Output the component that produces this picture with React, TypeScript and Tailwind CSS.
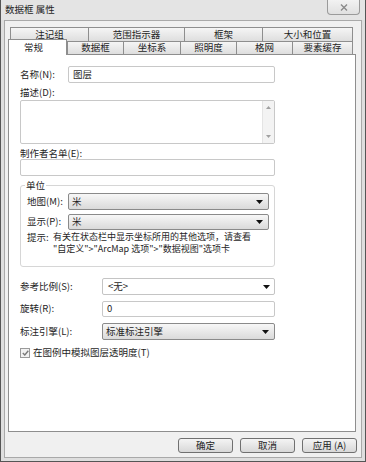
import React from "react";

const font = "font-['Noto_Sans_CJK_SC','Liberation_Sans',sans-serif]";

function Arrow() {
  return (
    <svg width="7" height="4" viewBox="0 0 7 4" className="shrink-0">
      <path d="M0 0H7L3.5 4Z" fill="#111" />
    </svg>
  );
}

function Select({ value, width, height = 17, flat = false }: { value: string; width: number; height?: number; flat?: boolean }) {
  return (
    <div
      style={{ width, height }}
      className={
        flat
          ? "flex items-center justify-between pl-[5px] pr-[4px] border border-[#c4c4c4] rounded-[2px] bg-white"
          : "flex items-center justify-between pl-[3px] pr-[5px] border border-[#8a8a8a] rounded-[2px] bg-gradient-to-b from-[#f7f7f7] to-[#dadada]"
      }
    >
      <span className="leading-none">{value}</span>
      <Arrow />
    </div>
  );
}

function Input({ value = "", width, height = 17 }: { value?: string; width: number; height?: number }) {
  return (
    <div style={{ width, height }} className="flex items-center pl-[4px] border border-[#c8c8c8] rounded-[2px] bg-white">
      <span className="leading-none">{value}</span>
    </div>
  );
}

function Tab({ label, width, last = false }: { label: string; width: number; last?: boolean }) {
  return (
    <div
      style={{ width }}
      className={
        "h-full flex items-center justify-center border-t border-l border-[#8e8e8e] bg-gradient-to-b from-[#f5f5f5] to-[#dedede] leading-none " +
        (last ? "border-r" : "")
      }
    >
      {label}
    </div>
  );
}

function Button({ label }: { label: string }) {
  return (
    <div className="w-[55px] h-[15px] flex items-center justify-center border border-[#707070] rounded-[3px] bg-gradient-to-b from-[#f4f4f4] to-[#d8d8d8] leading-none">
      {label}
    </div>
  );
}

export default function App() {
  return (
    <div className={`w-[366px] h-[462px] flex flex-col bg-[#dedede] border-x border-b border-[#555] text-[9.5px] text-[#1e1e1e] ${font}`}>
      {/* title bar */}
      <div className="relative h-[20px] flex items-center pl-[4px] bg-[#e4e4e4]">
        <span className="leading-none">数据框 属性</span>
        <div className="absolute right-[5px] top-0 w-[33px] h-[15px] flex items-center justify-center border border-t-0 border-[#9a9a9a] rounded-b-[4px] bg-gradient-to-b from-[#f2f2f2] to-[#e0e0e0]">
          <svg width="8" height="7" viewBox="0 0 8 7">
            <path d="M1 0.5L7 6.5M7 0.5L1 6.5" stroke="#8a8a8a" strokeWidth="1.4" />
          </svg>
        </div>
      </div>

      {/* client frame */}
      <div className="flex-1 ml-[3px] mr-[3px] mb-[3px] border border-[#a9a9a9] bg-[#f0f0f0] flex flex-col pt-[6px]">
        {/* tabs */}
        <div className="ml-[3px] mr-[5px] h-[27px] flex flex-col">
          <div className="h-[14px] flex pl-[2px]">
            <Tab label="注记组" width={78} />
            <Tab label="范围指示器" width={96} />
            <Tab label="框架" width={78} />
            <Tab label="大小和位置" width={91} last />
          </div>
          <div className="h-[13px] flex items-start">
            <div className="relative z-10 -mt-[2px] w-[59px] h-[16px] flex items-center pl-[15px] bg-white border-t border-l border-r border-[#8e8e8e] leading-none">
              常规
            </div>
            <Tab label="数据框" width={56} />
            <Tab label="坐标系" width={57} />
            <Tab label="照明度" width={56} />
            <Tab label="格网" width={56} />
            <Tab label="要素缓存" width={61} last />
          </div>
        </div>

        {/* panel */}
        <div className="ml-[3px] mr-[5px] h-[378px] bg-white border border-[#8e8e8e] pl-[11px] pt-[11px] flex flex-col">
          <div className="h-[17px] flex items-center">
            <span className="w-[48px] leading-none">名称(N):</span>
            <Input value="图层" width={207} />
          </div>

          <div className="mt-[3px] h-[14px] leading-[12px]">描述(D):</div>
          <div className="w-[255px] h-[44px] flex border border-[#c8c8c8] rounded-[2px] bg-white">
            <div className="flex-1" />
            <div className="w-[12px] h-full flex flex-col items-center justify-between py-[5px] bg-[#f3f3f3] border-l border-[#e4e4e4]">
              <svg width="5" height="3" viewBox="0 0 5 3">
                <path d="M0 3H5L2.5 0Z" fill="#a0a0a0" />
              </svg>
              <svg width="5" height="3" viewBox="0 0 5 3">
                <path d="M0 0H5L2.5 3Z" fill="#a0a0a0" />
              </svg>
            </div>
          </div>

          <div className="mt-[3px] h-[12px] leading-[12px]">制作者名单(E):</div>
          <Input width={255} />

          {/* group box */}
          <div className="relative mt-[9px] w-[255px] h-[82px] border border-[#d6d6d6] rounded-[3px] pl-[6px] pt-[7px] flex flex-col">
            <span className="absolute left-[4px] -top-[7px] px-[1px] bg-white leading-[12px]">单位</span>
            <div className="h-[17px] flex items-center">
              <span className="w-[41px] leading-none">地图(M):</span>
              <Select value="米" width={201} />
            </div>
            <div className="mt-[4px] h-[16px] flex items-center">
              <span className="w-[41px] leading-none">显示(P):</span>
              <Select value="米" width={201} height={16} />
            </div>
            <div className="mt-[1px] flex text-[9px] leading-[12px]">
              <span className="w-[26px] shrink-0 text-[9.5px]">提示:</span>
              <div className="flex flex-col">
                <span>有关在状态栏中显示坐标所用的其他选项，请查看</span>
                <span>"自定义"&gt;"ArcMap 选项"&gt;"数据视图"选项卡</span>
              </div>
            </div>
          </div>

          <div className="mt-[11px] h-[17px] flex items-center">
            <span className="w-[82px] leading-none">参考比例(S):</span>
            <Select value="<无>" width={173} flat />
          </div>
          <div className="mt-[6px] h-[16px] flex items-center">
            <span className="w-[82px] leading-none">旋转(R):</span>
            <Input value="0" width={173} height={16} />
          </div>
          <div className="mt-[6px] h-[17px] flex items-center">
            <span className="w-[82px] leading-none">标注引擎(L):</span>
            <Select value="标准标注引擎" width={173} />
          </div>
          <div className="mt-[7px] h-[12px] flex items-center">
            <div className="w-[10px] h-[10px] flex items-center justify-center border border-[#9a9a9a] bg-[#f2f2f2]">
              <svg width="7" height="6" viewBox="0 0 7 6">
                <path d="M0.8 3L2.8 5L6.3 0.8" fill="none" stroke="#7a7a7a" strokeWidth="1.4" />
              </svg>
            </div>
            <span className="ml-[3px] leading-none">在图例中模拟图层透明度(T)</span>
          </div>
        </div>

        {/* buttons */}
        <div className="mt-[6px] flex justify-end gap-[7px] pr-[4px]">
          <Button label="确定" />
          <Button label="取消" />
          <Button label="应用 (A)" />
        </div>
      </div>
    </div>
  );
}
